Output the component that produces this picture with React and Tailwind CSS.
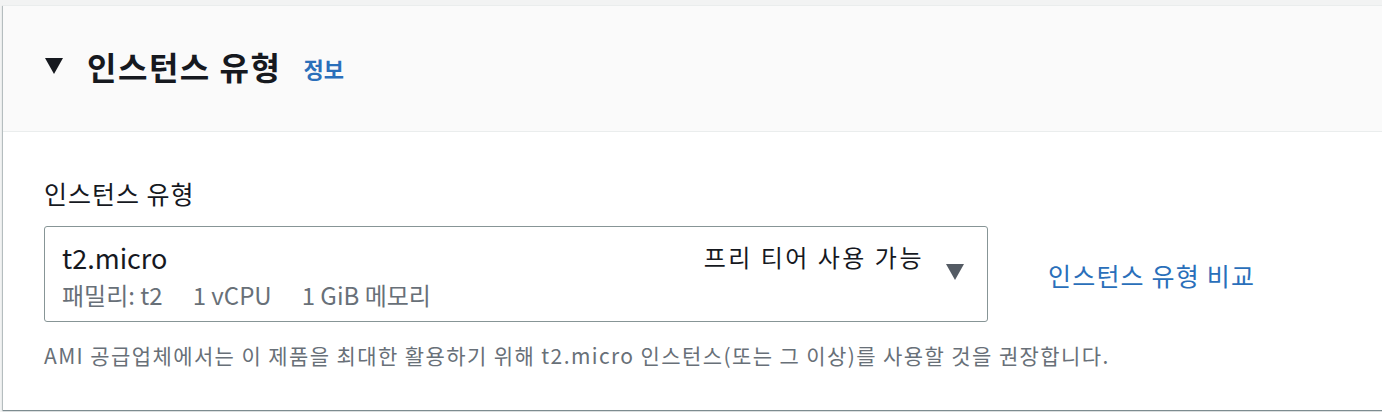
import React from "react";

const font = { fontFamily: '"Noto Sans CJK KR", "Noto Sans", sans-serif' };

const Caret = ({ className }) => (
  <svg viewBox="0 0 18 16" className={className} fill="currentColor">
    <path d="M0 0h18L9 16z" />
  </svg>
);

const App = () => {
  return (
    <div className="h-[412px] w-[1382px] overflow-hidden bg-[#f2f3f3] pt-[5px] pl-[3px]" style={font}>
      <div className="w-[1420px] h-[405px] bg-white border-t border-[#eaeded] shadow-[0_1px_1px_0_rgba(0,28,36,0.35),-1px_1px_1px_0_rgba(0,28,36,0.2)]">
        <div className="h-[126px] bg-[#fafafa] border-b border-[#eaeded] flex items-center pl-[42px] pb-[6px]">
          <Caret className="w-[18px] h-[16px] text-[#16191f]" />
          <h2 className="ml-[24px] text-[32px] tracking-[1.5px] font-bold text-[#16191f] leading-none">인스턴스 유형</h2>
          <a className="ml-[22px] text-[22px] font-bold text-[#2a6fba] leading-none mt-[4px]">정보</a>
        </div>
        <div className="pl-[41px] pt-[46px]">
          <div className="text-[25px] tracking-[1px] text-[#16191f] leading-[30px]">인스턴스 유형</div>
          <div className="flex items-center mt-[18px]">
            <div className="w-[944px] h-[96px] border border-[#879596] rounded-[3px] flex items-start pl-[17px] pr-[22px]">
              <div className="flex-1 pt-[14px]">
                <div className="text-[27px] text-[#16191f] leading-[34px]">t2.micro</div>
                <div className="text-[24px] text-[#687078] leading-[28px] mt-[6px] flex gap-[30px]">
                  <span>패밀리: t2</span>
                  <span>1 vCPU</span>
                  <span>1 GiB 메모리</span>
                </div>
              </div>
              <div className="flex items-start pt-[15px]">
                <span className="text-[24px] tracking-[2.5px] text-[#16191f] leading-[30px]">프리 티어 사용 가능</span>
                <Caret className="ml-[21px] mt-[22px] w-[20px] h-[16px] text-[#545b64]" />
              </div>
            </div>
            <a className="ml-[60px] text-[25px] tracking-[1.2px] text-[#2a6fba] leading-[30px] mt-[2px]">인스턴스 유형 비교</a>
          </div>
          <p className="mt-[19px] text-[21px] tracking-[1.4px] text-[#687078] leading-[28px]">
            AMI 공급업체에서는 이 제품을 최대한 활용하기 위해 t2.micro 인스턴스(또는 그 이상)를 사용할 것을 권장합니다.
          </p>
        </div>
      </div>
    </div>
  );
};

export default App;
